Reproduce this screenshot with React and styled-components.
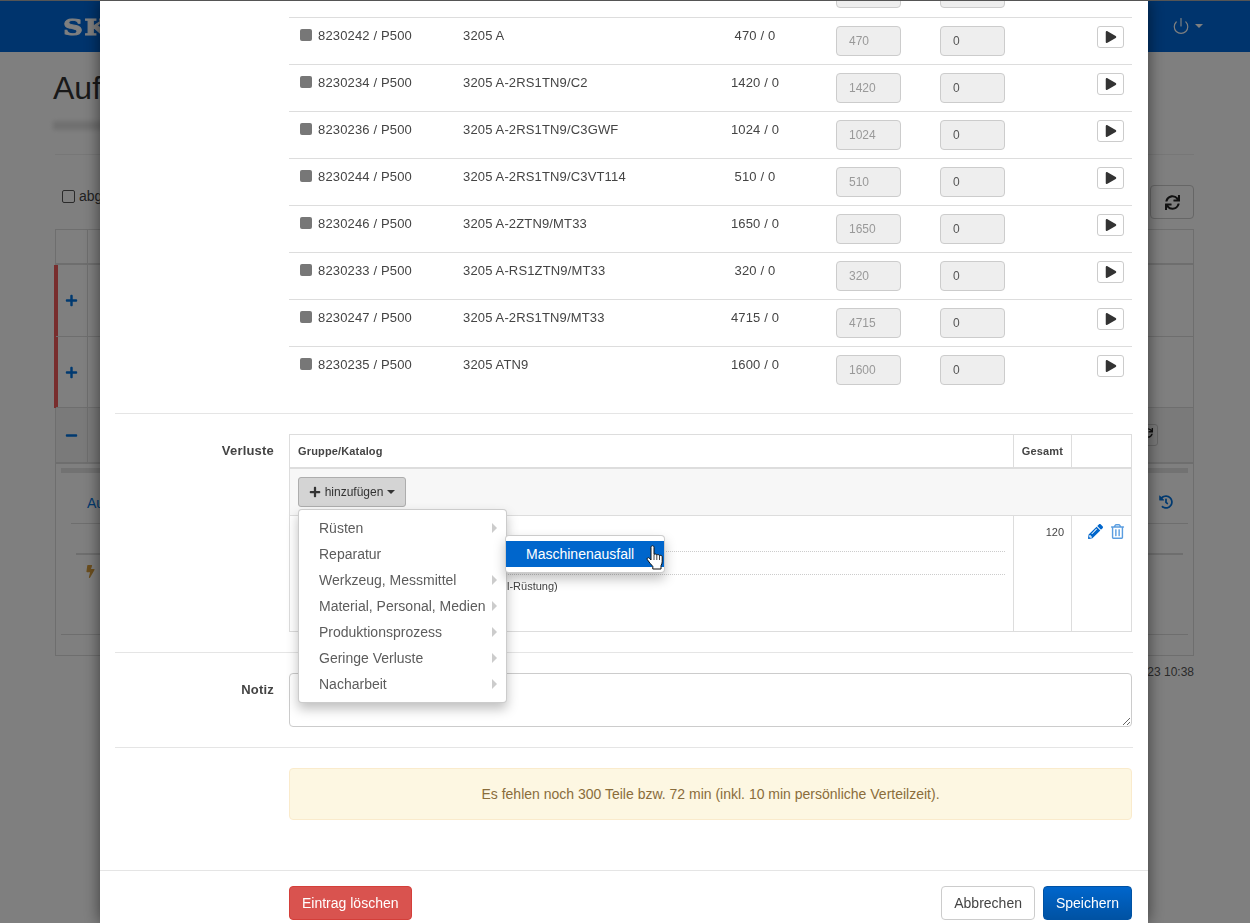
import React from "react";
import styled, { createGlobalStyle } from "styled-components";
import { Power } from "lucide-react";
import { FaBolt, FaHistory, FaMinus, FaPencilAlt, FaPlay, FaPlus, FaRegTrashAlt, FaSync } from "react-icons/fa";

const GlobalStyle = createGlobalStyle`
  html, body {
    margin: 0;
    height: 923px;
    overflow: hidden;
    background: #fff;
    font-family: "Liberation Sans", Arial, sans-serif;
    font-size: 13px;
    color: #444;
  }
  * { box-sizing: border-box; }
`;

/* page behind the dialog */
const Page = styled.div`
  width: 1250px;
  height: 923px;
  overflow: hidden;
`;

const Navbar = styled.div`
  height: 52px;
  background: #0068da;
  display: flex;
  align-items: center;
  justify-content: space-between;
  padding: 0 47px 0 63px;
`;

const Logo = styled.div`
  font-family: "DejaVu Serif", serif;
  font-weight: 700;
  font-size: 23px;
  letter-spacing: 1px;
  color: #fff;
  -webkit-text-stroke: 0.8px #fff;
  transform: scaleX(1.2);
  transform-origin: left center;
`;

const PowerMenu = styled.div`
  display: flex;
  align-items: center;
  gap: 5px;
  color: #fff;
`;

const Caret = styled.span`
  display: inline-block;
  width: 0;
  height: 0;
  border-top: 4px solid ${(p) => p.$color || "currentColor"};
  border-left: 4px solid transparent;
  border-right: 4px solid transparent;
`;

const Content = styled.div`
  padding: 0 56px 0 55px;
`;

const Title = styled.h1`
  margin: 18px 0 0 -2px;
  font-size: 32px;
  line-height: 36px;
  font-weight: 400;
  color: #333;
`;

const BlurredLine = styled.div`
  width: 60px;
  height: 9px;
  margin: 15px 0 0 -2px;
  background: #e0e0e0;
  filter: blur(2px);
`;

const PageRule = styled.hr`
  margin: 24px 0 0;
  border: 0;
  border-top: 1px solid #eee;
`;

const FilterBar = styled.div`
  height: 74px;
  padding: 30px 0 0 7px;
  display: flex;
  justify-content: space-between;
  align-items: flex-start;
  font-size: 14px;
`;

const CheckLabel = styled.label`
  display: flex;
  align-items: center;
  gap: 4px;
  margin-top: 3px;
`;

const Check = styled.span`
  width: 13px;
  height: 13px;
  border: 1px solid #555;
  border-radius: 2px;
  background: #fff;
`;

const RefreshButton = styled.div`
  width: 44px;
  height: 34px;
  border: 1px solid #ccc;
  border-radius: 4px;
  display: flex;
  align-items: center;
  justify-content: center;
  font-size: 15px;
  color: #222;
`;

const Sheet = styled.div`
  border: 1px solid #ddd;
  height: 427px;
`;

const SheetRow = styled.div`
  display: flex;
  height: ${(p) => p.$height}px;
  border-bottom: ${(p) => (p.$thick ? "2px" : "1px")} solid #ddd;
  background: ${(p) => (p.$shade ? "#f5f5f5" : "transparent")};
  box-shadow: ${(p) => (p.$flag ? "-2px 0 0 #f05a5a, inset 2px 0 0 #f05a5a" : "none")};
`;

const ToggleCell = styled.div`
  width: 32px;
  border-right: 1px solid #ddd;
  display: flex;
  align-items: center;
  justify-content: center;
  color: #0073e0;
  font-size: 13px;
`;

const RowAction = styled.div`
  margin: 16px 35px 0 auto;
  width: 20px;
  height: 22px;
  padding-top: 3px;
  border: 1px solid #ccc;
  border-radius: 3px;
  display: flex;
  justify-content: center;
  font-size: 10px;
  color: #222;
`;

const Detail = styled.div`
  margin: 4px 5px 0;
  height: 167px;
  border-top: 5px solid #e4e4e4;
  border-bottom: 1px solid #ddd;
`;

const DetailTabs = styled.div`
  height: 51px;
  margin-left: 10px;
  padding: 22px 15px 0 16px;
  border-bottom: 1px solid #ddd;
  display: flex;
  justify-content: space-between;
  font-size: 14px;
  color: #0073e0;
`;

const DetailList = styled.div`
  margin: 29px 5px 0 15px;
  padding: 10px 0 0 8px;
  border-top: 2px solid #ddd;
  color: #d69c3c;
  font-size: 13px;
`;

const Timestamp = styled.div`
  margin-top: 9px;
  text-align: right;
  font-size: 12px;
  color: #555;
`;

const Backdrop = styled.div`
  position: fixed;
  inset: 0;
  background: rgba(0, 0, 0, 0.5);
`;

const TopEdge = styled.div`
  position: fixed;
  top: 0;
  left: 0;
  right: 0;
  height: 1px;
  background: #555;
  z-index: 5;
`;

/* dialog, scrolled down a bit so that its first row is cut off */
const Modal = styled.div`
  position: fixed;
  top: 0;
  left: 100px;
  width: 1048px;
  height: 923px;
  overflow: hidden;
  background: #fff;
  box-shadow: 0 0 15px rgba(0, 0, 0, 0.55);
`;

const ModalBody = styled.div`
  margin-top: -30px;
  padding: 0 15px;
`;

const FormRow = styled.div`
  display: grid;
  grid-template-columns: 159px 843px;
  column-gap: 15px;
  padding: ${(p) => (p.$flush ? "0" : "20px")} 1px 20px 0;
  border-bottom: ${(p) => (p.$plain ? "0" : "1px solid #e5e5e5")};
`;

const FieldLabel = styled.label`
  text-align: right;
  font-weight: 700;
  line-height: 18px;
  padding-top: 8px;
  letter-spacing: 0.2px;
  color: #444;
`;

const OrderRow = styled.div`
  display: grid;
  grid-template-columns: 174px 237px 136px 104px 157px 35px;
  height: 47px;
  padding-top: 8px;
  border-top: ${(p) => (p.$first ? "0" : "1px solid #ddd")};
  line-height: 20px;
  letter-spacing: 0.15px;
`;

const OrderNo = styled.div`
  display: flex;
  align-items: flex-start;
  gap: 6px;
  padding-left: 11px;
`;

const StatusSquare = styled.span`
  width: 12px;
  height: 12px;
  margin-top: 3px;
  border-radius: 2px;
  background: #777;
`;

const Quantity = styled.div`
  padding-right: 26px;
  text-align: center;
`;

const NumInput = styled.input`
  width: 65px;
  height: 30px;
  padding: 0 12px;
  border: 1px solid #ccc;
  border-radius: 4px;
  background: #eee;
  font: 12px "Liberation Sans", Arial, sans-serif;
  color: ${(p) => (p.$dim ? "#999" : "#555")};
`;

const PlayButton = styled.button`
  width: 27px;
  height: 22px;
  padding: 0;
  border: 1px solid #ccc;
  border-radius: 3px;
  background: #fff;
  display: flex;
  align-items: center;
  justify-content: center;
  font-size: 12px;
  color: #333;
`;

const LossTable = styled.div`
  border: 1px solid #ddd;
  height: 198px;
  font-size: 11px;
`;

const LossHead = styled.div`
  display: grid;
  grid-template-columns: 723px 58px 60px;
  height: 34px;
  border-bottom: 2px solid #ddd;
  font-weight: 700;
  line-height: 32px;
  letter-spacing: 0.15px;
`;

const HeadCell = styled.div`
  padding-left: ${(p) => (p.$first ? "8px" : "0")};
  border-left: ${(p) => (p.$first ? "0" : "1px solid #ddd")};
  text-align: ${(p) => (p.$first ? "left" : "center")};
`;

const LossToolbar = styled.div`
  position: relative;
  height: 47px;
  padding: 8px;
  background: #f7f7f7;
  border-bottom: 1px solid #ddd;
`;

const AddButton = styled.button`
  width: 108px;
  height: 30px;
  padding: 0;
  border: 1px solid #adadad;
  border-radius: 3px;
  background: #d4d4d4;
  display: flex;
  align-items: center;
  justify-content: center;
  gap: 4px;
  font: 12px "Liberation Sans", Arial, sans-serif;
  color: #333;
`;

const Menu = styled.ul`
  position: absolute;
  z-index: 3;
  top: 40px;
  left: 8px;
  width: ${(p) => p.$width}px;
  margin: 0;
  padding: 5px 0;
  list-style: none;
  background: #fff;
  border: 1px solid rgba(0, 0, 0, 0.2);
  border-radius: 4px;
  box-shadow: 0 6px 12px rgba(0, 0, 0, 0.25);
  font-size: 14px;
`;

const SubMenu = styled(Menu)`
  top: -6px;
  left: 206px;
`;

const MenuItem = styled.li`
  position: relative;
  height: 26px;
  padding-left: 20px;
  line-height: 26px;
  white-space: nowrap;
  color: ${(p) => (p.$active ? "#fff" : "#5c5c5c")};
  background: ${(p) => (p.$active ? "#0066cc" : "transparent")};
`;

const MenuArrow = styled.span`
  position: absolute;
  top: 8px;
  right: 9px;
  border-left: 5px solid #ccc;
  border-top: 5px solid transparent;
  border-bottom: 5px solid transparent;
`;

const Cursor = styled.svg`
  position: absolute;
  left: 140px;
  top: 4px;
  width: 18px;
  height: 25px;
`;

const LossBody = styled.div`
  display: grid;
  grid-template-columns: 723px 58px 60px;
  height: 115px;
`;

const LossEntries = styled.div`
  padding: 0 8px;
`;

const LossLine = styled.div`
  height: 23px;
  border-bottom: 1px dotted #ccc;
  &:first-child { height: 36px; }
`;

const LossText = styled.div`
  padding: 5px 0 0 209px;
  line-height: 13px;
`;

const TotalCell = styled.div`
  padding: 10px 7px 0 0;
  border-left: 1px solid #ddd;
  text-align: right;
`;

const ActionCell = styled.div`
  padding: 8px 6px 0 16px;
  border-left: 1px solid #ddd;
  display: flex;
  justify-content: space-between;
  align-items: flex-start;
  font-size: 15px;
  color: #0066cc;
`;

const TrashIcon = styled(FaRegTrashAlt)`
  color: #5a9de0;
`;

const NoteArea = styled.textarea`
  display: block;
  width: 843px;
  height: 54px;
  border: 1px solid #ccc;
  border-radius: 4px;
  outline: 0;
`;

const Alert = styled.div`
  height: 52px;
  border: 1px solid #faebcc;
  border-radius: 4px;
  background: #fdf7e2;
  color: #8a6d3b;
  font-size: 14px;
  text-align: center;
  line-height: 50px;
`;

const Footer = styled.div`
  position: absolute;
  top: 870px;
  left: 0;
  right: 0;
  padding: 15px 16px 15px 189px;
  border-top: 1px solid #e5e5e5;
  display: flex;
  gap: 8px;
`;

const Button = styled.button`
  height: 34px;
  padding: 0 ${(p) => p.$pad || 12}px;
  border: 1px solid ${(p) => p.$border};
  border-radius: 4px;
  background: ${(p) => p.$bg};
  color: ${(p) => p.$color};
  font: 14px "Liberation Sans", Arial, sans-serif;
  margin-left: ${(p) => (p.$push ? "auto" : "0")};
`;

const orders = [
  ["8230242 / P500", "3205 A", "470 / 0", "470"],
  ["8230234 / P500", "3205 A-2RS1TN9/C2", "1420 / 0", "1420"],
  ["8230236 / P500", "3205 A-2RS1TN9/C3GWF", "1024 / 0", "1024"],
  ["8230244 / P500", "3205 A-2RS1TN9/C3VT114", "510 / 0", "510"],
  ["8230246 / P500", "3205 A-2ZTN9/MT33", "1650 / 0", "1650"],
  ["8230233 / P500", "3205 A-RS1ZTN9/MT33", "320 / 0", "320"],
  ["8230247 / P500", "3205 A-2RS1TN9/MT33", "4715 / 0", "4715"],
  ["8230235 / P500", "3205 ATN9", "1600 / 0", "1600"],
];

const menuItems = [
  ["Rüsten", true],
  ["Reparatur", false],
  ["Werkzeug, Messmittel", true],
  ["Material, Personal, Medien", true],
  ["Produktionsprozess", true],
  ["Geringe Verluste", true],
  ["Nacharbeit", true],
];

function HandCursor() {
  return (
    <Cursor viewBox="0 0 18 25">
      <path
        d="M5 2.4C5 1.3 5.7.7 6.5.7S8 1.3 8 2.4V9.6c.5-.8 2.4-.8 2.8.4.5-.7 2.3-.6 2.7.6.6-.6 2.5-.3 2.7 1v5.2c0 1.6-.6 2.7-1.2 3.8V24H6.8v-2.6C5 19.6 3 17 1.3 14.6c-.8-1.2 1-2.6 2-1.5L5 15z"
        fill="#fff"
        stroke="#111"
        strokeWidth="1"
        strokeLinejoin="round"
      />
      <path d="M8 10v5M10.8 10v5M13.5 10.6V15" stroke="#111" strokeWidth=".8" fill="none" />
    </Cursor>
  );
}

function PageBehind() {
  return (
    <Page>
      <Navbar>
        <Logo>SKF</Logo>
        <PowerMenu>
          <Power size={18} strokeWidth={1.6} />
          <Caret />
        </PowerMenu>
      </Navbar>
      <Content>
        <Title>Auf</Title>
        <BlurredLine />
        <PageRule />
        <FilterBar>
          <CheckLabel>
            <Check />
            abg
          </CheckLabel>
          <RefreshButton>
            <FaSync />
          </RefreshButton>
        </FilterBar>
        <Sheet>
          <SheetRow $height={35} $thick>
            <ToggleCell />
          </SheetRow>
          <SheetRow $height={72} $flag>
            <ToggleCell>
              <FaPlus />
            </ToggleCell>
          </SheetRow>
          <SheetRow $height={71} $flag>
            <ToggleCell>
              <FaPlus />
            </ToggleCell>
          </SheetRow>
          <SheetRow $height={56} $thick $shade>
            <ToggleCell>
              <FaMinus />
            </ToggleCell>
            <RowAction>
              <FaSync />
            </RowAction>
          </SheetRow>
          <Detail>
            <DetailTabs>
              <span>Au</span>
              <FaHistory />
            </DetailTabs>
            <DetailList>
              <FaBolt />
            </DetailList>
          </Detail>
        </Sheet>
        <Timestamp>23 10:38</Timestamp>
      </Content>
    </Page>
  );
}

export default function App() {
  return (
    <>
      <GlobalStyle />
      <PageBehind />
      <Backdrop />
      <TopEdge />
      <Modal>
        <ModalBody>
          <FormRow $flush>
            <div />
            <div>
              <OrderRow $first>
                <div />
                <div />
                <div />
                <NumInput readOnly value="" />
                <NumInput readOnly value="" />
                <div />
              </OrderRow>
              {orders.map(([no, type, qty, total]) => (
                <OrderRow key={no}>
                  <OrderNo>
                    <StatusSquare />
                    {no}
                  </OrderNo>
                  <div>{type}</div>
                  <Quantity>{qty}</Quantity>
                  <NumInput readOnly $dim value={total} />
                  <NumInput readOnly value="0" />
                  <PlayButton>
                    <FaPlay />
                  </PlayButton>
                </OrderRow>
              ))}
            </div>
          </FormRow>
          <FormRow>
            <FieldLabel>Verluste</FieldLabel>
            <LossTable>
              <LossHead>
                <HeadCell $first>Gruppe/Katalog</HeadCell>
                <HeadCell>Gesamt</HeadCell>
                <HeadCell />
              </LossHead>
              <LossToolbar>
                <AddButton>
                  <FaPlus size={12} />
                  hinzufügen
                  <Caret />
                </AddButton>
                <Menu $width={209}>
                  {menuItems.map(([label, hasSub]) => (
                    <MenuItem key={label}>
                      {label}
                      {hasSub && <MenuArrow />}
                      {label === "Reparatur" && (
                        <SubMenu $width={160}>
                          <MenuItem $active>
                            Maschinenausfall
                            <HandCursor />
                          </MenuItem>
                        </SubMenu>
                      )}
                    </MenuItem>
                  ))}
                </Menu>
              </LossToolbar>
              <LossBody>
                <LossEntries>
                  <LossLine />
                  <LossLine />
                  <LossText>l-Rüstung)</LossText>
                </LossEntries>
                <TotalCell>120</TotalCell>
                <ActionCell>
                  <FaPencilAlt />
                  <TrashIcon />
                </ActionCell>
              </LossBody>
            </LossTable>
          </FormRow>
          <FormRow>
            <FieldLabel>Notiz</FieldLabel>
            <NoteArea />
          </FormRow>
          <FormRow $plain>
            <div />
            <Alert>Es fehlen noch 300 Teile bzw. 72 min (inkl. 10 min persönliche Verteilzeit).</Alert>
          </FormRow>
        </ModalBody>
        <Footer>
          <Button $bg="#d9534f" $border="#d43f3a" $color="#fff">Eintrag löschen</Button>
          <Button $push $bg="#fff" $border="#ccc" $color="#444">Abbrechen</Button>
          <Button $bg="linear-gradient(#0066cc, #0052a3)" $border="#0052a3" $color="#fff">Speichern</Button>
        </Footer>
      </Modal>
    </>
  );
}
